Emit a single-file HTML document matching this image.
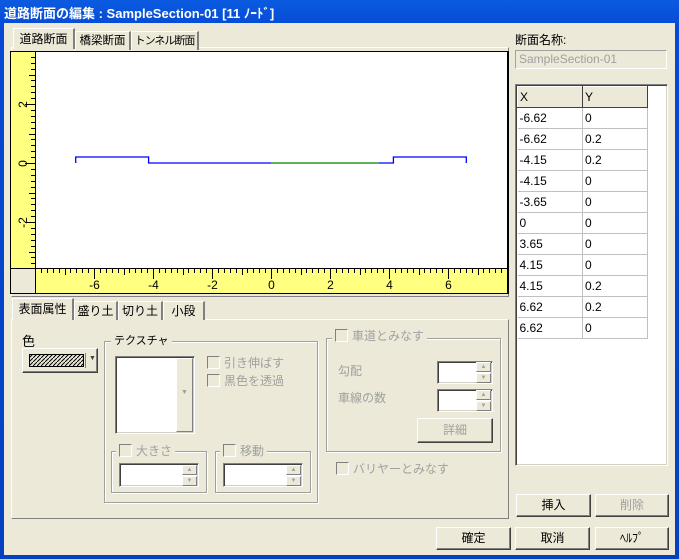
<!DOCTYPE html>
<html><head><meta charset="utf-8"><style>
*{box-sizing:border-box}
body{margin:0;width:679px;height:559px;overflow:hidden;background:#0842c6;font-family:"Liberation Sans","Noto Sans CJK JP",sans-serif;font-size:12px;color:#000}
.win{position:absolute;left:0;top:0;width:679px;height:559px;background:linear-gradient(#0a5be0,#0648d4 30px,#0441c0);}
.title{position:absolute;left:4px;top:3px;color:#fff;font-weight:bold;font-size:13px;letter-spacing:0}
.client{position:absolute;left:4px;top:23px;width:671px;height:532px;background:#ece9d8}
.a{position:absolute}
.tab{position:absolute;height:19px;border:1px solid #fff;border-right:2px solid #808080;border-bottom:none;background:#ece9d8;padding:2px 0 0;text-align:center;font-size:12px;white-space:nowrap;line-height:14px;overflow:hidden}
.sunk{border:1px solid;border-color:#808080 #fff #fff #808080;box-shadow:inset 1px 1px 0 #404040, inset -1px -1px 0 #d4d0c8;background:#fff}
.btn{position:absolute;border:1px solid;border-color:#fff #404040 #404040 #fff;box-shadow:inset -1px -1px 0 #808080;background:#ece9d8;text-align:center;line-height:20px;font-size:12px}
.grp{position:absolute;border:1px solid #a0a0a0;box-shadow:1px 1px 0 #fff, inset 1px 1px 0 #fff}
.lab{position:absolute;background:#ece9d8;padding:0 3px;color:#a0a0a0;font-size:12px;white-space:nowrap;line-height:14px}
.cb{display:inline-block;width:13px;height:13px;border:1px solid;border-color:#808080 #fff #fff #808080;vertical-align:-2px;margin-right:4px}
.dis{color:#a0a0a0}
.spin{position:absolute;width:15px;height:22px}
.spin div{height:10px;border:1px solid;border-color:#fff #808080 #808080 #fff;background:#ece9d8;margin-bottom:1px;font-size:6px;color:#a0a0a0;text-align:center;line-height:8px}
table{border-collapse:collapse}
td{border-right:1px solid #c0c0c0;border-bottom:1px solid #c0c0c0;height:21px;padding:0 2px;font-size:12px}
</style></head><body>
<div class="win">
<div class="title">道路断面の編集 : SampleSection-01 [11 ﾉｰﾄﾞ]</div>
<div class="client"></div>
</div>
<!-- top tab panel -->
<div class="a" style="left:11px;top:47px;width:498px;height:250px;border:1px solid;border-color:#fff #808080 #808080 #fff"></div>
<div class="tab" style="left:13px;top:28px;width:62px;height:21px;z-index:2;padding-top:3px">道路断面</div>
<div class="tab" style="left:75px;top:31px;width:56px;font-size:11.5px">橋梁断面</div>
<div class="tab" style="left:131px;top:31px;width:68px;font-size:11px;letter-spacing:-1px">トンネル断面</div>
<svg class="a" style="left:10px;top:51px" width="499" height="243" id="chart">
<rect x="0" y="0" width="499" height="243" fill="#000"/>
<rect x="1" y="1" width="24" height="216" fill="#ffff80"/>
<rect x="1" y="218" width="24" height="24" fill="#ece9d8"/>
<rect x="26" y="1" width="471" height="216" fill="#fff"/>
<rect x="26" y="218" width="471" height="24" fill="#ffff80"/>
<g id="ticks" stroke="#000" stroke-width="1"></g>
<g font-size="12" font-family="Liberation Sans" fill="#000" id="labels"></g>
<polyline fill="none" stroke="#0000ff" stroke-width="1.3" points="65.7,112 65.7,106 138.6,106 138.6,112 261,112"/>
<polyline fill="none" stroke="#008000" stroke-width="1.3" points="261,112 368.7,112"/>
<polyline fill="none" stroke="#0000ff" stroke-width="1.3" points="368.7,112 383.4,112 383.4,106 456.3,106 456.3,112"/>
</svg>
<script>
(function(){var t=document.getElementById('ticks'),l=document.getElementById('labels'),s='',lb='';var ox=261,oy=112,k=29.5;
for(var i=-45;i<=40;i++){var v=i/5;var x=ox+v*k;if(x<27||x>496)continue;x=Math.round(x)+0.5;var L=(i%5==0)?10:4;if(i%5==0&&Math.abs(i)%10==5)L=6;s+='<line x1="'+x+'" y1="218" x2="'+x+'" y2="'+(218+L)+'"/>';if(i%10==0)lb+='<text x="'+x+'" y="238" text-anchor="middle">'+(v)+'</text>';}
for(var i=-25;i<=25;i++){var v=i/5;var y=oy-v*k;if(y<2||y>216)continue;y=Math.round(y)+0.5;var L=(i%5==0)?10:4;if(i%5==0&&Math.abs(i)%10==5)L=6;s+='<line x1="'+(25-L)+'" y1="'+y+'" x2="25" y2="'+y+'"/>';if(i%10==0)lb+='<text transform="translate(13,'+y+') rotate(-90)" text-anchor="middle" y="4">'+(v)+'</text>';}
t.innerHTML=s;l.innerHTML=lb;})();
</script>
<!-- bottom tab panel -->
<div class="a" style="left:11px;top:319px;width:498px;height:200px;border:1px solid;border-color:#fff #808080 #808080 #fff"></div>
<div class="tab" style="left:12px;top:298px;width:62px;height:22px;z-index:2;padding-top:3px">表面属性</div>
<div class="tab" style="left:74px;top:301px;width:44px">盛り土</div>
<div class="tab" style="left:118px;top:301px;width:45px">切り土</div>
<div class="tab" style="left:163px;top:301px;width:42px">小段</div>
<div class="a" style="left:22px;top:331px;font-size:13px">色</div>
<div class="btn" style="left:22px;top:348px;width:76px;height:25px">
<svg class="a" style="left:6px;top:5px" width="56" height="14"><defs><pattern id="h" width="4" height="4" patternUnits="userSpaceOnUse"><path d="M-1,5 L5,-1" stroke="#000" stroke-width="1"/></pattern></defs><rect x="0.5" y="0.5" width="54" height="12" fill="url(#h)" stroke="#000"/></svg>
<div class="a" style="left:62px;top:4px;width:1px;height:15px;background:#808080"></div>
<div class="a" style="left:66px;top:0;font-size:7px;color:#404040">▼</div></div>
<div class="grp" style="left:104px;top:341px;width:214px;height:162px"></div>
<div class="lab" style="left:111px;top:334px;color:#000;font-size:11px">テクスチャ</div>
<div class="a sunk" style="left:115px;top:356px;width:80px;height:78px"></div>
<div class="a" style="left:176px;top:358px;width:17px;height:74px;border:1px solid;border-color:#fff #808080 #808080 #fff;background:#ece9d8;color:#a0a0a0;font-size:7px;text-align:center;padding-top:30px">▼</div>
<div class="a dis" style="left:207px;top:354px"><span class="cb"></span>引き伸ばす</div>
<div class="a dis" style="left:207px;top:372px"><span class="cb"></span>黒色を透過</div>
<div class="grp" style="left:111px;top:451px;width:96px;height:42px"></div>
<div class="lab" style="left:116px;top:444px"><span class="cb"></span>大きさ</div>
<div class="a sunk" style="left:119px;top:463px;width:80px;height:24px"></div>
<div class="spin" style="left:182px;top:465px"><div>▲</div><div>▼</div></div>
<div class="grp" style="left:215px;top:451px;width:96px;height:42px"></div>
<div class="lab" style="left:220px;top:444px"><span class="cb"></span>移動</div>
<div class="a sunk" style="left:223px;top:463px;width:80px;height:24px"></div>
<div class="spin" style="left:286px;top:465px"><div>▲</div><div>▼</div></div>
<div class="grp" style="left:326px;top:338px;width:175px;height:114px"></div>
<div class="lab" style="left:332px;top:329px"><span class="cb"></span>車道とみなす</div>
<div class="a dis" style="left:338px;top:362px">勾配</div>
<div class="a sunk" style="left:437px;top:361px;width:56px;height:23px"></div>
<div class="spin" style="left:476px;top:362px"><div>▲</div><div>▼</div></div>
<div class="a dis" style="left:338px;top:389px">車線の数</div>
<div class="a sunk" style="left:437px;top:389px;width:56px;height:23px"></div>
<div class="spin" style="left:476px;top:390px"><div>▲</div><div>▼</div></div>
<div class="btn dis" style="left:417px;top:418px;width:76px;height:25px;line-height:23px">詳細</div>
<div class="a dis" style="left:336px;top:460px"><span class="cb"></span>バリヤーとみなす</div>
<!-- right -->
<div class="a" style="left:515px;top:31px">断面名称:</div>
<div class="a" style="left:515px;top:50px;width:152px;height:19px;border:1px solid;border-color:#a0a0a0 #fff #fff #a0a0a0;color:#a0a0a0;padding:1px 3px;font-size:12px">SampleSection-01</div>
<div class="a sunk" style="left:515px;top:84px;width:153px;height:382px;overflow:hidden">
<table style="position:absolute;left:1px;top:1px">
<tr><td style="width:65px;background:#ece9d8;border:1px solid;border-color:#fff #404040 #404040 #fff;height:21px">X</td><td style="width:65px;background:#ece9d8;border:1px solid;border-color:#fff #404040 #404040 #fff">Y</td></tr>
<tr><td>-6.62</td><td>0</td></tr><tr><td>-6.62</td><td>0.2</td></tr><tr><td>-4.15</td><td>0.2</td></tr><tr><td>-4.15</td><td>0</td></tr><tr><td>-3.65</td><td>0</td></tr><tr><td>0</td><td>0</td></tr><tr><td>3.65</td><td>0</td></tr><tr><td>4.15</td><td>0</td></tr><tr><td>4.15</td><td>0.2</td></tr><tr><td>6.62</td><td>0.2</td></tr><tr><td>6.62</td><td>0</td></tr>
</table></div>
<div class="btn" style="left:516px;top:494px;width:75px;height:23px">挿入</div>
<div class="btn dis" style="left:595px;top:494px;width:74px;height:23px">削除</div>
<div class="btn" style="left:436px;top:527px;width:75px;height:23px">確定</div>
<div class="btn" style="left:515px;top:527px;width:75px;height:23px">取消</div>
<div class="btn" style="left:595px;top:527px;width:74px;height:23px">ﾍﾙﾌﾟ</div>
</body></html>
